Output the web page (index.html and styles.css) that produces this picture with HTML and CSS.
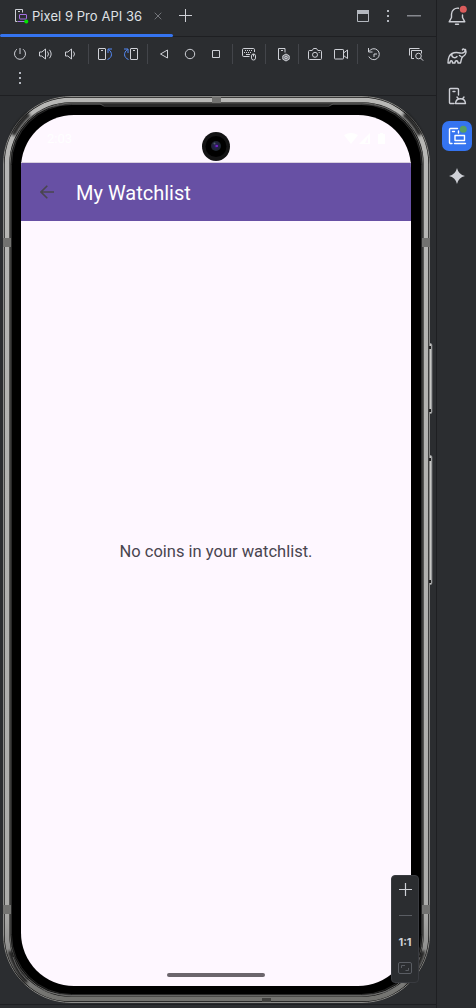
FILE: index.html
```html
<!DOCTYPE html>
<html lang="en">
<head>
<meta charset="utf-8">
<title>Running Devices</title>
<link rel="stylesheet" href="styles.css">
</head>
<body>
<div class="window">
  <main class="pane">
    <header class="tabs">
      <div class="tab">
        <svg class="tab-icon" width="16" height="16" viewBox="0 0 16 16" fill="none"><path d="M4.500 13.500h-2v-12h7v3" stroke="#ced0d6"/><path d="M5 3.500h2" stroke="#ced0d6"/><rect x="6.500" y="6.500" width="7" height="4.500" rx=".5" stroke="#a571e6"/><path d="M5 13.500h7" stroke="#a571e6"/><circle cx="13.300" cy="13.500" r="2" fill="#00e600"/></svg>
        <span class="tab-title">Pixel 9 Pro API 36</span>
        <svg class="close" width="8" height="8" viewBox="0 0 8 8"><path d="M.7.7l6.600 6.600M7.300.7L.7 7.300" stroke="#74767b"/></svg>
      </div>
      <svg class="add" width="13" height="13" viewBox="0 0 13 13"><path d="M6.500 0v13M0 6.500h13" stroke="#ced0d6"/></svg>
      <div class="tab-actions">
        <svg width="12" height="12" viewBox="0 0 12 12"><path d="M.5.5h11v11H.5z" fill="none" stroke="#b4b8bf"/><path d="M0 0h12v4H0z" fill="#b4b8bf"/></svg>
        <svg width="2" height="12" viewBox="0 0 2 12" fill="#b4b8bf"><path d="M0 0h2v2H0zM0 5h2v2H0zM0 10h2v2H0z"/></svg>
        <svg width="14" height="2" viewBox="0 0 14 2"><path d="M0 0h14v1.500H0z" fill="#86888e"/></svg>
      </div>
    </header>
    <div class="toolbar">
      <svg class="tool" viewBox="0 0 16 16"><path d="M8 2v6M5 3.200a5.500 5.500 0 1 0 6 0"/></svg>
      <svg class="tool" viewBox="0 0 16 16"><path d="M1.500 6v4h2.300L7.500 13V3L3.800 6zM9.500 5.500q2 2.500 0 5M11.500 3.800q3.300 4.200 0 8.400"/></svg>
      <svg class="tool" viewBox="0 0 16 16"><path d="M1.500 6v4h2.300L7.500 13V3L3.800 6zM9.500 5.500q2 2.500 0 5"/></svg>
      <i class="sep"></i>
      <svg class="tool" viewBox="0 0 16 16"><rect x="1.500" y="2.500" width="7" height="11" rx=".5"/><path d="M4 4.500h2"/><path class="blue" d="M10.500 13.500c5-2 5.200-7 1-10M11 7V3h4"/></svg>
      <svg class="tool" viewBox="0 0 16 16"><rect x="7.500" y="2.500" width="7" height="11" rx=".5"/><path d="M10 4.500h2"/><path class="blue" d="M5.500 13.500c-5-2-5.200-7-1-10M5 7V3H1"/></svg>
      <i class="sep"></i>
      <svg class="tool" viewBox="0 0 16 16"><path d="M11.500 4v8L4.500 8z"/></svg>
      <svg class="tool" viewBox="0 0 16 16"><circle cx="8" cy="8" r="4.700"/></svg>
      <svg class="tool" viewBox="0 0 16 16"><path d="M4.500 4.500h7v7h-7z"/></svg>
      <i class="sep"></i>
      <svg class="tool" viewBox="0 0 16 16"><path d="M8.500 10.500H2.700a1.200 1.200 0 0 1-1.200-1.200V3.700a1.200 1.200 0 0 1 1.200-1.200h9.600a1.200 1.200 0 0 1 1.200 1.200V6"/><path stroke-dasharray="1 1" d="M4 4.500h8M3 6.500h8"/><path d="M5 8.500h4"/><rect x="10.500" y="8" width="4" height="6" rx="1.900"/><path d="M12.500 8v2.500"/></svg>
      <i class="sep"></i>
      <svg class="tool" viewBox="0 0 16 16"><path d="M6.500 13.500h-2v-11h6.500v4M7 4.500h2"/><path d="M12 8l3.200 1.800v3.400L12 15l-3.200-1.800V9.800z" fill="#6f7177"/><circle cx="12" cy="11.500" r="1.300"/></svg>
      <i class="sep"></i>
      <svg class="tool" viewBox="0 0 16 16"><path d="M2.500 4.500h2.700l1.300-2h3l1.300 2h2.700c.6 0 1 .4 1 1v7c0 .6-.4 1-1 1h-11c-.6 0-1-.4-1-1v-7c0-.6.4-1 1-1z"/><circle cx="8" cy="8.800" r="2.500"/><path d="M11.700 6.500h1"/></svg>
      <svg class="tool" viewBox="0 0 16 16"><rect x="1.500" y="3.500" width="9" height="9.500" rx=".6"/><path d="M10.500 7l4-3v8.500l-4-3"/></svg>
      <i class="sep"></i>
      <svg class="tool" viewBox="0 0 16 16"><path d="M3 5.500a5.500 5.500 0 1 1-.2 5M2.500 2v4h4M8 11V8h3"/></svg>
      <svg class="tool inspect" viewBox="0 0 16 16"><path d="M1.500 9.500v-7h10M6 12.500H3.500v-8h10v3"/><circle cx="10.500" cy="10" r="2.800"/><path d="M12.500 12l2.700 2.700"/></svg>
      <svg class="tool" viewBox="0 0 16 16"><path fill="#b4b8bf" stroke="none" d="M7 2h2v2H7zM7 7h2v2H7zM7 12h2v2H7z"/></svg>
    </div>
    <section class="stage">
      <div class="phone">
        <svg class="frame" width="436" height="908" viewBox="0 96 436 908" fill="none">
          <defs>
            <linearGradient id="metal" x1="0" y1="0" x2="0" y2="1"><stop offset="0" stop-color="#b7b7b5"/><stop offset=".9" stop-color="#acacaa"/><stop offset=".96" stop-color="#858584"/><stop offset="1" stop-color="#72726f"/></linearGradient>
            <filter id="soft" x="-50%" y="-50%" width="200%" height="200%"><feGaussianBlur stdDeviation="1.400"/></filter>
          </defs>
          <g fill="#c7c7c5" stroke="#96989a" stroke-width="1"><rect x="427.500" y="343.500" width="4.300" height="70" rx="1.500"/><rect x="427.500" y="455.500" width="4.300" height="129" rx="1.500"/></g>
          <rect x="3" y="96" width="427" height="907" rx="68" fill="#111"/>
          <rect x="3.500" y="96.500" width="426" height="906" rx="67.500" stroke="#8b8b89"/>
          <rect x="7" y="100" width="419" height="899" rx="64" stroke="url(#metal)" stroke-width="4.600"/>
          <rect x="10" y="103" width="413" height="893" rx="61" stroke="#686866"/>
          <rect x="11.500" y="104.500" width="410" height="890" rx="60" fill="#000" stroke="#292929"/>
          <g stroke="#151515" stroke-width="4.500" filter="url(#soft)"><path d="M13 135Q19 123 29 114M404 114Q414 123 420 135M10 951Q15 969 27 982M423 951Q418 969 406 982"/></g>
          <path d="M18 130Q32 108 65 104H100L104 106H329L333 104H369Q401 108 415 130" stroke="#666" stroke-width=".8"/>
          <path d="M13 957Q24 994 72 995.500H361Q409 994 420 957" stroke="#777" stroke-width=".7"/>
          <path d="M212 97h9v6h-9zM3 238h8v9H3zM422 238h8v9h-8zM3 905h8v9H3zM422 905h8v9h-8z" fill="#727270"/>
          <path d="M262 998h9v4h-9z" fill="#41413f"/>
          <path d="M429 346h2v3h-2zM429 409h2v3h-2zM429 458h2v3h-2zM429 580h2v3h-2z" fill="#222"/>
        </svg>
        <div class="screen">
          <div class="status">
            <span class="clock">2:03</span>
            <svg class="signals" width="42" height="14" viewBox="0 0 42 14" fill="#fff"><path d="M0 3Q7-1 14 3L7 12z"/><path d="M26 1v11H15z"/><path d="M24 5v6h-3z" fill="#fef7ff"/><path d="M34 2h2V1h3v1h2v10h-7z"/></svg>
          </div>
          <div class="appbar">
            <svg width="14" height="14" viewBox="0 0 14 14"><path d="M14 7H1M7.300.7L1 7l6.300 6.300" fill="none" stroke="#49454f" stroke-width="1.600"/></svg>
            <h1>My Watchlist</h1>
          </div>
          <div class="content"><p>No coins in your watchlist.</p></div>
          <div class="handle"></div>
          <svg class="camera" width="28" height="29" viewBox="0 0 28 29"><defs><radialGradient id="lens"><stop stop-color="#5b24b0"/><stop offset=".35" stop-color="#25204e"/><stop offset="1" stop-color="#1c252c"/></radialGradient></defs><ellipse cx="14" cy="14.500" rx="14" ry="14.500" fill="#131314"/><circle cx="14" cy="14.500" r="10.500" fill="#000"/><circle cx="14" cy="14" r="5" fill="url(#lens)"/><circle cx="12.500" cy="11.500" r="1" fill="#53606a"/><circle cx="15" cy="14" r="1" fill="#8426dd"/></svg>
        </div>
      </div>
      <div class="zoombar">
        <svg width="13" height="13" viewBox="0 0 13 13"><path d="M6.500 0v13M0 6.500h13" stroke="#ced0d6" stroke-width="1.200"/></svg>
        <svg class="minus" width="13" height="1" viewBox="0 0 13 1"><path d="M0 0h13v1H0z" fill="#5a5d63"/></svg>
        <b>1:1</b>
        <svg class="fit" width="14" height="12" viewBox="0 0 14 12" fill="none" stroke="#5a5d63"><rect x=".5" y=".5" width="13" height="11" rx="1.500"/><path d="M3.500 6V3.500H7M7.500 8.500h3V6"/></svg>
      </div>
    </section>
  </main>
  <aside class="rail">
    <div class="rail-item"><svg width="20" height="20" viewBox="0 0 20 20"><path d="M11.500 2.200A6 6 0 0 0 4.500 8v3.500l-2.300 4.300h15.600l-2.300-4.300V9M8.500 18.300h3"/><circle class="badge red" cx="16.300" cy="3.300" r="3.500"/></svg></div>
    <div class="rail-item"><svg width="20" height="20" viewBox="0 0 20 20"><path d="M1 17c0-5 1-8 4-9.500 2.500-1.200 5-1.200 8-.5 2.800.6 5-.6 5-2.500 0-1.500-2-2-2.600-.6M18.500 3.500c1.300 3-.3 5.800-2.500 7-2 1-1.500 4-2.500 6.500H11c0-3-3-3-3 0H5.500c0-3-2.500-3-2.500 0H1M5 8c-1 3 3 5 5 2.500M12.500 9.500l1.500 1"/></svg></div>
    <div class="rail-item"><svg width="20" height="20" viewBox="0 0 20 20"><path d="M7 17.500H3.500a1 1 0 0 1-1-1v-13a1 1 0 0 1 1-1h7a1 1 0 0 1 1 1V9M6 5.500h2M8.500 17.500h10c-.3-3-2.300-4.700-5-4.700s-4.700 1.700-5 4.700zM10 11l1.500 2M17 11l-1.500 2"/></svg></div>
    <div class="rail-item active"><svg width="20" height="20" viewBox="0 0 20 20"><path d="M5 17.500H3.500a1 1 0 0 1-1-1v-13a1 1 0 0 1 1-1h7M5.500 5.500h2M11.500 5v2M8 9.500h9.500v5H8zM7.500 17.500h11"/><circle class="badge green" cx="16.300" cy="3.300" r="3.500"/></svg></div>
    <div class="rail-item"><svg width="20" height="20" viewBox="0 0 20 20"><path class="spark" d="M10 2q1.500 6.500 8 8-6.500 1.500-8 8-1.500-6.500-8-8 6.500-1.500 8-8z"/></svg></div>
  </aside>
</div>
</body>
</html>
```

FILE: styles.css
```css
* { box-sizing: border-box; }
body { margin: 0; background: #2b2d30; font-family: Inter, sans-serif; }
svg { display: block; flex: none; }
.window { display: flex; width: 476px; height: 1008px; overflow: hidden; }
.pane { width: 437px; border-right: 1px solid #1e1f22; display: flex; flex-direction: column; }
.tabs { height: 37px; border-bottom: 1px solid #1e1f22; display: flex; align-items: center; padding-bottom: 4px; }
.tab { position: relative; width: 173px; height: 37px; padding: 3px 0 7px 13px; margin-bottom: -4px; display: flex; align-items: center; flex: none; }
.tab::after { content: ""; position: absolute; left: 0; right: 0; bottom: 0; height: 3px; border-radius: 2px; background: #3574f0; }
.tab-title { width: 110px; margin-left: 3px; font-size: 13px; line-height: 16px; letter-spacing: .05px; white-space: nowrap; color: #dfe1e5; }
.close { margin-left: 12px; }
.add { margin-left: 6px; margin-bottom: 1px; }
.tab-actions { display: flex; align-items: center; gap: 18px; margin-left: auto; padding-right: 15px; }
.toolbar { height: 59px; border-bottom: 1px solid #1e1f22; padding: 9px 0 0 12px; display: flex; flex-wrap: wrap; align-content: flex-start; gap: 8px 10px; flex: none; }
.tool { width: 16px; height: 16px; fill: none; stroke: #ced0d6; stroke-width: 1; }
.tool .blue { stroke: #548af7; }
.inspect { margin-left: 16px; }
.sep { width: 1px; height: 20px; margin: -2px -2px -2px; background: #43454a; }
.stage { position: relative; height: 909px; border-bottom: 1px solid #1e1f22; }
.phone { position: relative; height: 908px; padding: 19px 25px 18px 21px; }
.frame { position: absolute; left: 0; top: 0; }
.screen { position: relative; width: 390px; height: 871px; border-radius: 53px; overflow: hidden; background: #fef7ff; font-family: Roboto, sans-serif; display: flex; flex-direction: column; }
.status { height: 48px; border-bottom: 1px solid #d9d0df; padding: 0 25px 0 26px; display: flex; align-items: center; justify-content: space-between; color: #fff; }
.clock { font-size: 13px; }
.appbar { height: 58px; background: #6750a4; padding-left: 19px; display: flex; align-items: center; gap: 22px; flex: none; }
.appbar h1 { margin: 0; padding-top: 2px; font-weight: 400; font-size: 20px; line-height: 24px; color: #fff; }
.content { flex: 1; display: flex; align-items: center; justify-content: center; padding-bottom: 91px; }
.content p { margin: 0; font-size: 16.500px; line-height: 20px; color: #49454f; }
.handle { width: 98px; height: 4px; border-radius: 2px; background: #6b656c; margin: 0 auto 9px; }
.camera { position: absolute; left: 181px; top: 17px; }
.zoombar { position: absolute; left: 391px; top: 779px; width: 28px; height: 108px; border: 1px solid #393b40; border-radius: 4px; background: #2b2d30; color: #ced0d6; display: flex; flex-direction: column; align-items: center; padding-top: 7px; }
.minus { margin-top: 19px; }
.zoombar b { font-size: 11px; line-height: 14px; margin-top: 19px; }
.fit { margin-top: 13px; }
.rail { width: 39px; padding: 1px 4px 0 5px; }
.rail-item { width: 30px; height: 30px; margin-bottom: 10px; border-radius: 7px; display: grid; place-items: center; }
.rail-item svg { overflow: visible; fill: none; stroke: #ced0d6; stroke-width: 1.400; stroke-linecap: round; stroke-linejoin: round; }
.rail-item.active { background: #3574f0; }
.rail-item.active svg { stroke: #fff; }
.rail-item .badge { stroke: none; }
.red { fill: #db5c5c; }
.green { fill: #57a064; }
.spark { fill: #ced0d6; stroke: none; }
```
